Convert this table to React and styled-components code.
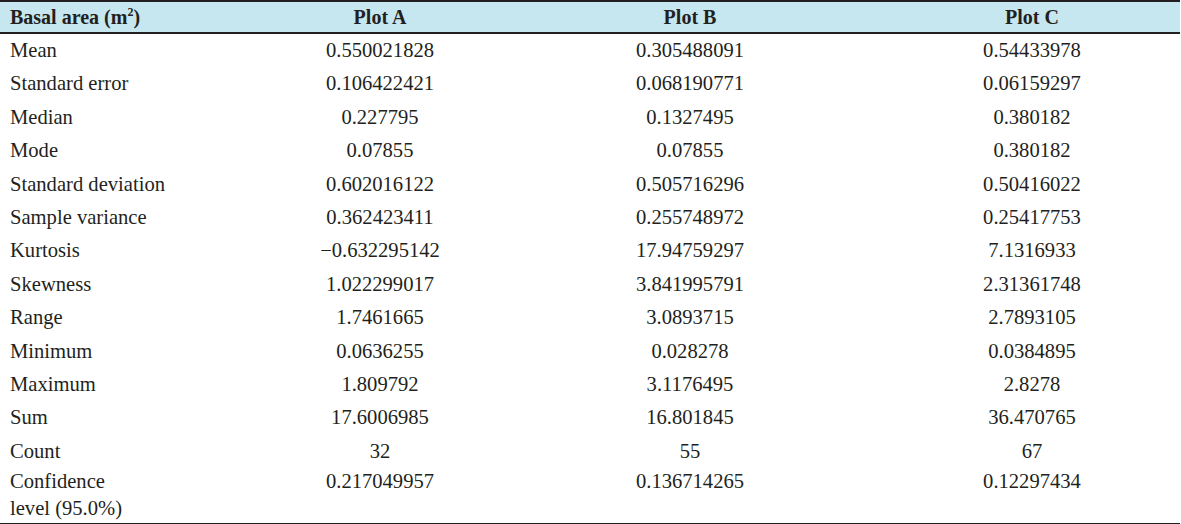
import React from "react";
import styled, { createGlobalStyle } from "styled-components";

const rows = [
  ["Mean", "0.550021828", "0.305488091", "0.54433978"],
  ["Standard error", "0.106422421", "0.068190771", "0.06159297"],
  ["Median", "0.227795", "0.1327495", "0.380182"],
  ["Mode", "0.07855", "0.07855", "0.380182"],
  ["Standard deviation", "0.602016122", "0.505716296", "0.50416022"],
  ["Sample variance", "0.362423411", "0.255748972", "0.25417753"],
  ["Kurtosis", "\u22120.632295142", "17.94759297", "7.1316933"],
  ["Skewness", "1.022299017", "3.841995791", "2.31361748"],
  ["Range", "1.7461665", "3.0893715", "2.7893105"],
  ["Minimum", "0.0636255", "0.028278", "0.0384895"],
  ["Maximum", "1.809792", "3.1176495", "2.8278"],
  ["Sum", "17.6006985", "16.801845", "36.470765"],
  ["Count", "32", "55", "67"],
];

function App() {
  return (
    <>
      <GlobalStyle />
      <Table>
        <colgroup>
          <col style={{ width: 264 }} />
          <col style={{ width: 232 }} />
          <col style={{ width: 388 }} />
          <col style={{ width: 296 }} />
        </colgroup>
        <thead>
          <tr>
            <HeadCell>
              Basal area (m<Sup>2</Sup>)
            </HeadCell>
            <HeadCell center>Plot A</HeadCell>
            <HeadCell center>Plot B</HeadCell>
            <HeadCell center>Plot C</HeadCell>
          </tr>
        </thead>
        <tbody>
          {rows.map((row) => (
            <tr key={row[0]}>
              <Cell>{row[0]}</Cell>
              <Cell center>{row[1]}</Cell>
              <Cell center>{row[2]}</Cell>
              <Cell center>{row[3]}</Cell>
            </tr>
          ))}
          <LastRow>
            <Cell tall>
              Confidence
              <br />
              level (95.0%)
            </Cell>
            <Cell tall center>0.217049957</Cell>
            <Cell tall center>0.136714265</Cell>
            <Cell tall center>0.12297434</Cell>
          </LastRow>
        </tbody>
      </Table>
    </>
  );
}

const GlobalStyle = createGlobalStyle`
  body {
    margin: 0;
    background: #fff;
    font-family: "Liberation Serif", "Times New Roman", serif;
    color: #231f20;
  }
`;
const Table = styled.table`
  width: 1180px;
  border-collapse: collapse;
  table-layout: fixed;
  font-size: 20.6px;
  border-top: 2px solid #231f20;
  border-bottom: 2px solid #231f20;
`;
const HeadCell = styled.th`
  background: #c6e7ef;
  height: 30px;
  padding: 0 0 0 ${(p) => (p.center ? "0" : "10px")};
  text-align: ${(p) => (p.center ? "center" : "left")};
  font-weight: bold;
  font-size: 20px;
  line-height: 30px;
  border-bottom: 2px solid #231f20;
  white-space: nowrap;
`;
const Sup = styled.sup`
  font-size: 12px;
  line-height: 0;
  vertical-align: 8px;
`;
const Cell = styled.td`
  padding: ${(p) => (p.tall ? "0 0 2px" : "0")};
  padding-left: ${(p) => (p.center ? "0" : "10px")};
  text-align: ${(p) => (p.center ? "center" : "left")};
  vertical-align: top;
  line-height: ${(p) => (p.tall ? "26.5px" : "33.4px")};
  white-space: nowrap;
`;
const LastRow = styled.tr``;

export default App;
